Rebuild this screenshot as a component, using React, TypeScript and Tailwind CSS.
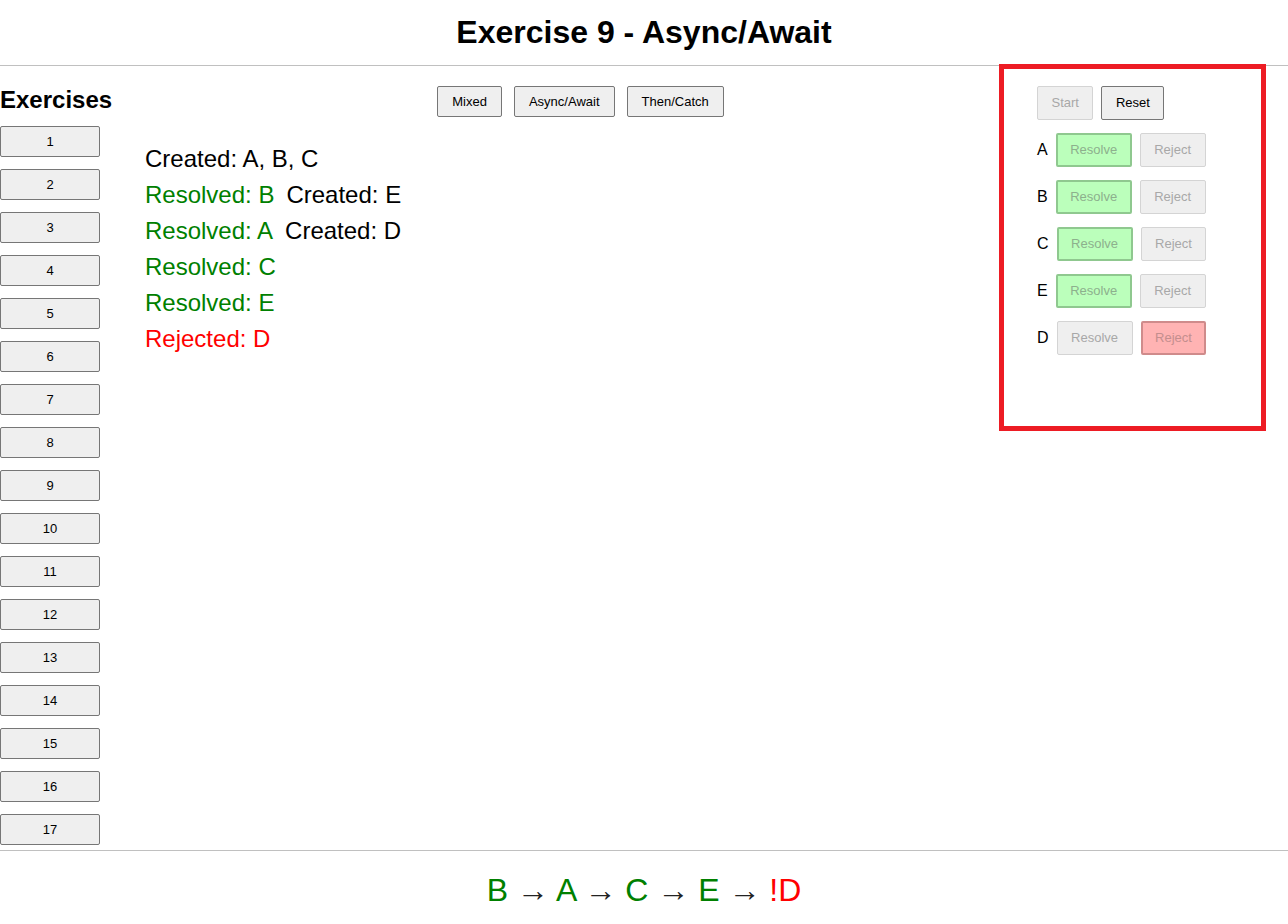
import React from "react"

const exercises = Array.from({ length: 17 }, (_, i) => i + 1)

type Row = { id: string; resolved: boolean }

const rows: Row[] = [
  { id: "A", resolved: true },
  { id: "B", resolved: true },
  { id: "C", resolved: true },
  { id: "E", resolved: true },
  { id: "D", resolved: false },
]

const btn = "h-[31px] rounded-[2px] border border-[#767676] bg-[#efefef] text-[13px] text-black"
const panelBtn = "h-[34px] rounded-[2px] text-[13px]"
const disabledBtn = `${panelBtn} border border-[#d4d4d4] bg-[#efefef] px-[13.5px] text-[#a8a8a8]`

export default function App() {
  return (
    <div className="relative min-h-screen bg-white font-['Liberation_Sans',Arial,sans-serif] text-black">
      <header className="flex h-[66px] items-center justify-center border-b border-[#c0c0c0]">
        <h1 className="pb-[2px] text-[32px] font-bold leading-none">Exercise 9 - Async/Await</h1>
      </header>

      <div className="flex">
        <aside className="w-[100px] shrink-0 pb-[5px] pt-[20px]">
          <h2 className="whitespace-nowrap text-[24px] font-bold leading-[28px]">Exercises</h2>
          <div className="mt-3 flex flex-col gap-3">
            {exercises.map((n) => (
              <button key={n} className={`${btn} w-[100px]`}>
                {n}
              </button>
            ))}
          </div>
        </aside>

        <main className="flex-1 pl-[45px] pt-[20px]">
          <div className="flex justify-center gap-3">
            <button className={`${btn} px-[14px]`}>Mixed</button>
            <button className={`${btn} px-[14px]`}>Async/Await</button>
            <button className={`${btn} px-[14px]`}>Then/Catch</button>
          </div>
          <div className="mt-6 text-[24px] leading-[36px]">
            <div>Created: A, B, C</div>
            <div className="flex gap-[12px]">
              <span className="text-[#008000]">Resolved: B</span>
              <span>Created: E</span>
            </div>
            <div className="flex gap-[12px]">
              <span className="text-[#008000]">Resolved: A</span>
              <span>Created: D</span>
            </div>
            <div className="text-[#008000]">Resolved: C</div>
            <div className="text-[#008000]">Resolved: E</div>
            <div className="text-[#ff0000]">Rejected: D</div>
          </div>
        </main>

        <section className="w-[272px] shrink-0 pl-[21px] pt-[20px]">
          <div className="flex flex-col gap-[13px]">
            <div className="flex gap-2">
              <button className={disabledBtn}>Start</button>
              <button className={`${panelBtn} border border-[#767676] bg-[#efefef] px-[13.5px] text-black`}>
                Reset
              </button>
            </div>
            {rows.map((r) => (
              <div key={r.id} className="flex items-center gap-2">
                <span className="text-base">{r.id}</span>
                <div className="flex gap-2">
                  {r.resolved ? (
                    <button
                      className={`${panelBtn} border-2 border-[#8fc88f] bg-[#bbffbb] px-[12.5px] text-[#8db08d]`}
                    >
                      Resolve
                    </button>
                  ) : (
                    <button className={disabledBtn}>Resolve</button>
                  )}
                  {r.resolved ? (
                    <button className={disabledBtn}>Reject</button>
                  ) : (
                    <button
                      className={`${panelBtn} border-2 border-[#cf8b8b] bg-[#ffb3b3] px-[12.5px] text-[#c48e8e]`}
                    >
                      Reject
                    </button>
                  )}
                </div>
              </div>
            ))}
          </div>
        </section>
      </div>

      <footer className="border-t border-[#c0c0c0] pb-[14px] pt-[19px] text-center text-[32px] leading-[40px]">
        <span className="text-[#008000]">B</span> <span className="text-[#222]">→</span>{" "}
        <span className="text-[#008000]">A</span> <span className="text-[#222]">→</span>{" "}
        <span className="text-[#008000]">C</span> <span className="text-[#222]">→</span>{" "}
        <span className="text-[#008000]">E</span> <span className="text-[#222]">→</span>{" "}
        <span className="text-[#ff0000]">!D</span>
      </footer>

      {/* highlight box drawn over the control panel */}
      <div className="pointer-events-none absolute left-[999px] top-[64px] h-[367px] w-[267px] border-[5px] border-[#ed1c24]" />
    </div>
  )
}
